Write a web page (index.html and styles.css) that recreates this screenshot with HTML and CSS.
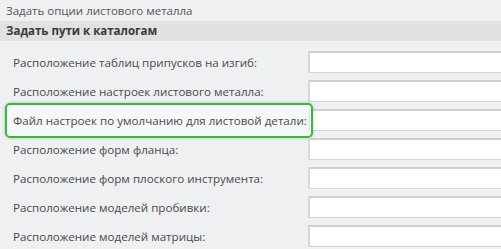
FILE: index.html
```html
<!DOCTYPE html>
<html>
<head>
<meta charset="utf-8">
<link rel="stylesheet" href="styles.css">
</head>
<body>
<div class="title">Задать опции листового металла</div>
<div class="section">Задать пути к каталогам</div>
<div class="form">
  <div class="row"><div class="label">Расположение таблиц припусков на изгиб:</div><div class="field"></div></div>
  <div class="row"><div class="label">Расположение настроек листового металла:</div><div class="field"></div></div>
  <div class="row hl"><div class="label">Файл настроек по умолчанию для листовой детали:</div><div class="field"></div></div>
  <div class="row"><div class="label">Расположение форм фланца:</div><div class="field"></div></div>
  <div class="row"><div class="label">Расположение форм плоского инструмента:</div><div class="field"></div></div>
  <div class="row"><div class="label">Расположение моделей пробивки:</div><div class="field"></div></div>
  <div class="row"><div class="label">Расположение моделей матрицы:</div><div class="field"></div></div>
</div>
</body>
</html>
```
FILE: styles.css
```css
html, body {
  margin: 0;
  padding: 0;
  background: #eff0f2;
  font-family: "Open Sans", "Noto Sans", sans-serif;
  font-size: 11.6px;
  color: #4a4a4a;
  overflow: hidden;
}
.title {
  height: 21px;
  line-height: 22px;
  padding-left: 6px;
  font-size: 11.5px;
  color: #555;
}
.section {
  height: 20px;
  line-height: 20px;
  padding-left: 6px;
  background: #e1e1e2;
  font-weight: bold;
  font-size: 11.5px;
  color: #3a3a3a;
}
.form {
  padding-top: 10px;
  display: flex;
  flex-direction: column;
  gap: 7px;
}
.row {
  display: flex;
  align-items: center;
  height: 22px;
  position: relative;
}
.label {
  flex: 0 0 295px;
  padding-left: 13px;
  white-space: nowrap;
}
.field {
  flex: 1 1 auto;
  height: 22px;
  box-sizing: border-box;
  background: #fff;
  border: 1px solid #d6d6d8;
  border-right: none;
  border-top: 2px solid #cfcfd1;
  border-left: 2px solid #d9d9db;
}
.hl::before {
  content: "";
  position: absolute;
  left: 5px;
  top: -6px;
  width: 308px;
  height: 35px;
  box-sizing: border-box;
  border: 2px solid #3db34a;
  border-radius: 5px;
  background: rgba(255,255,255,0.45);
  box-shadow: 0 0 3px rgba(60,170,70,0.5);
  z-index: 0;
}
.hl .label {
  position: relative;
  z-index: 1;
}
```
